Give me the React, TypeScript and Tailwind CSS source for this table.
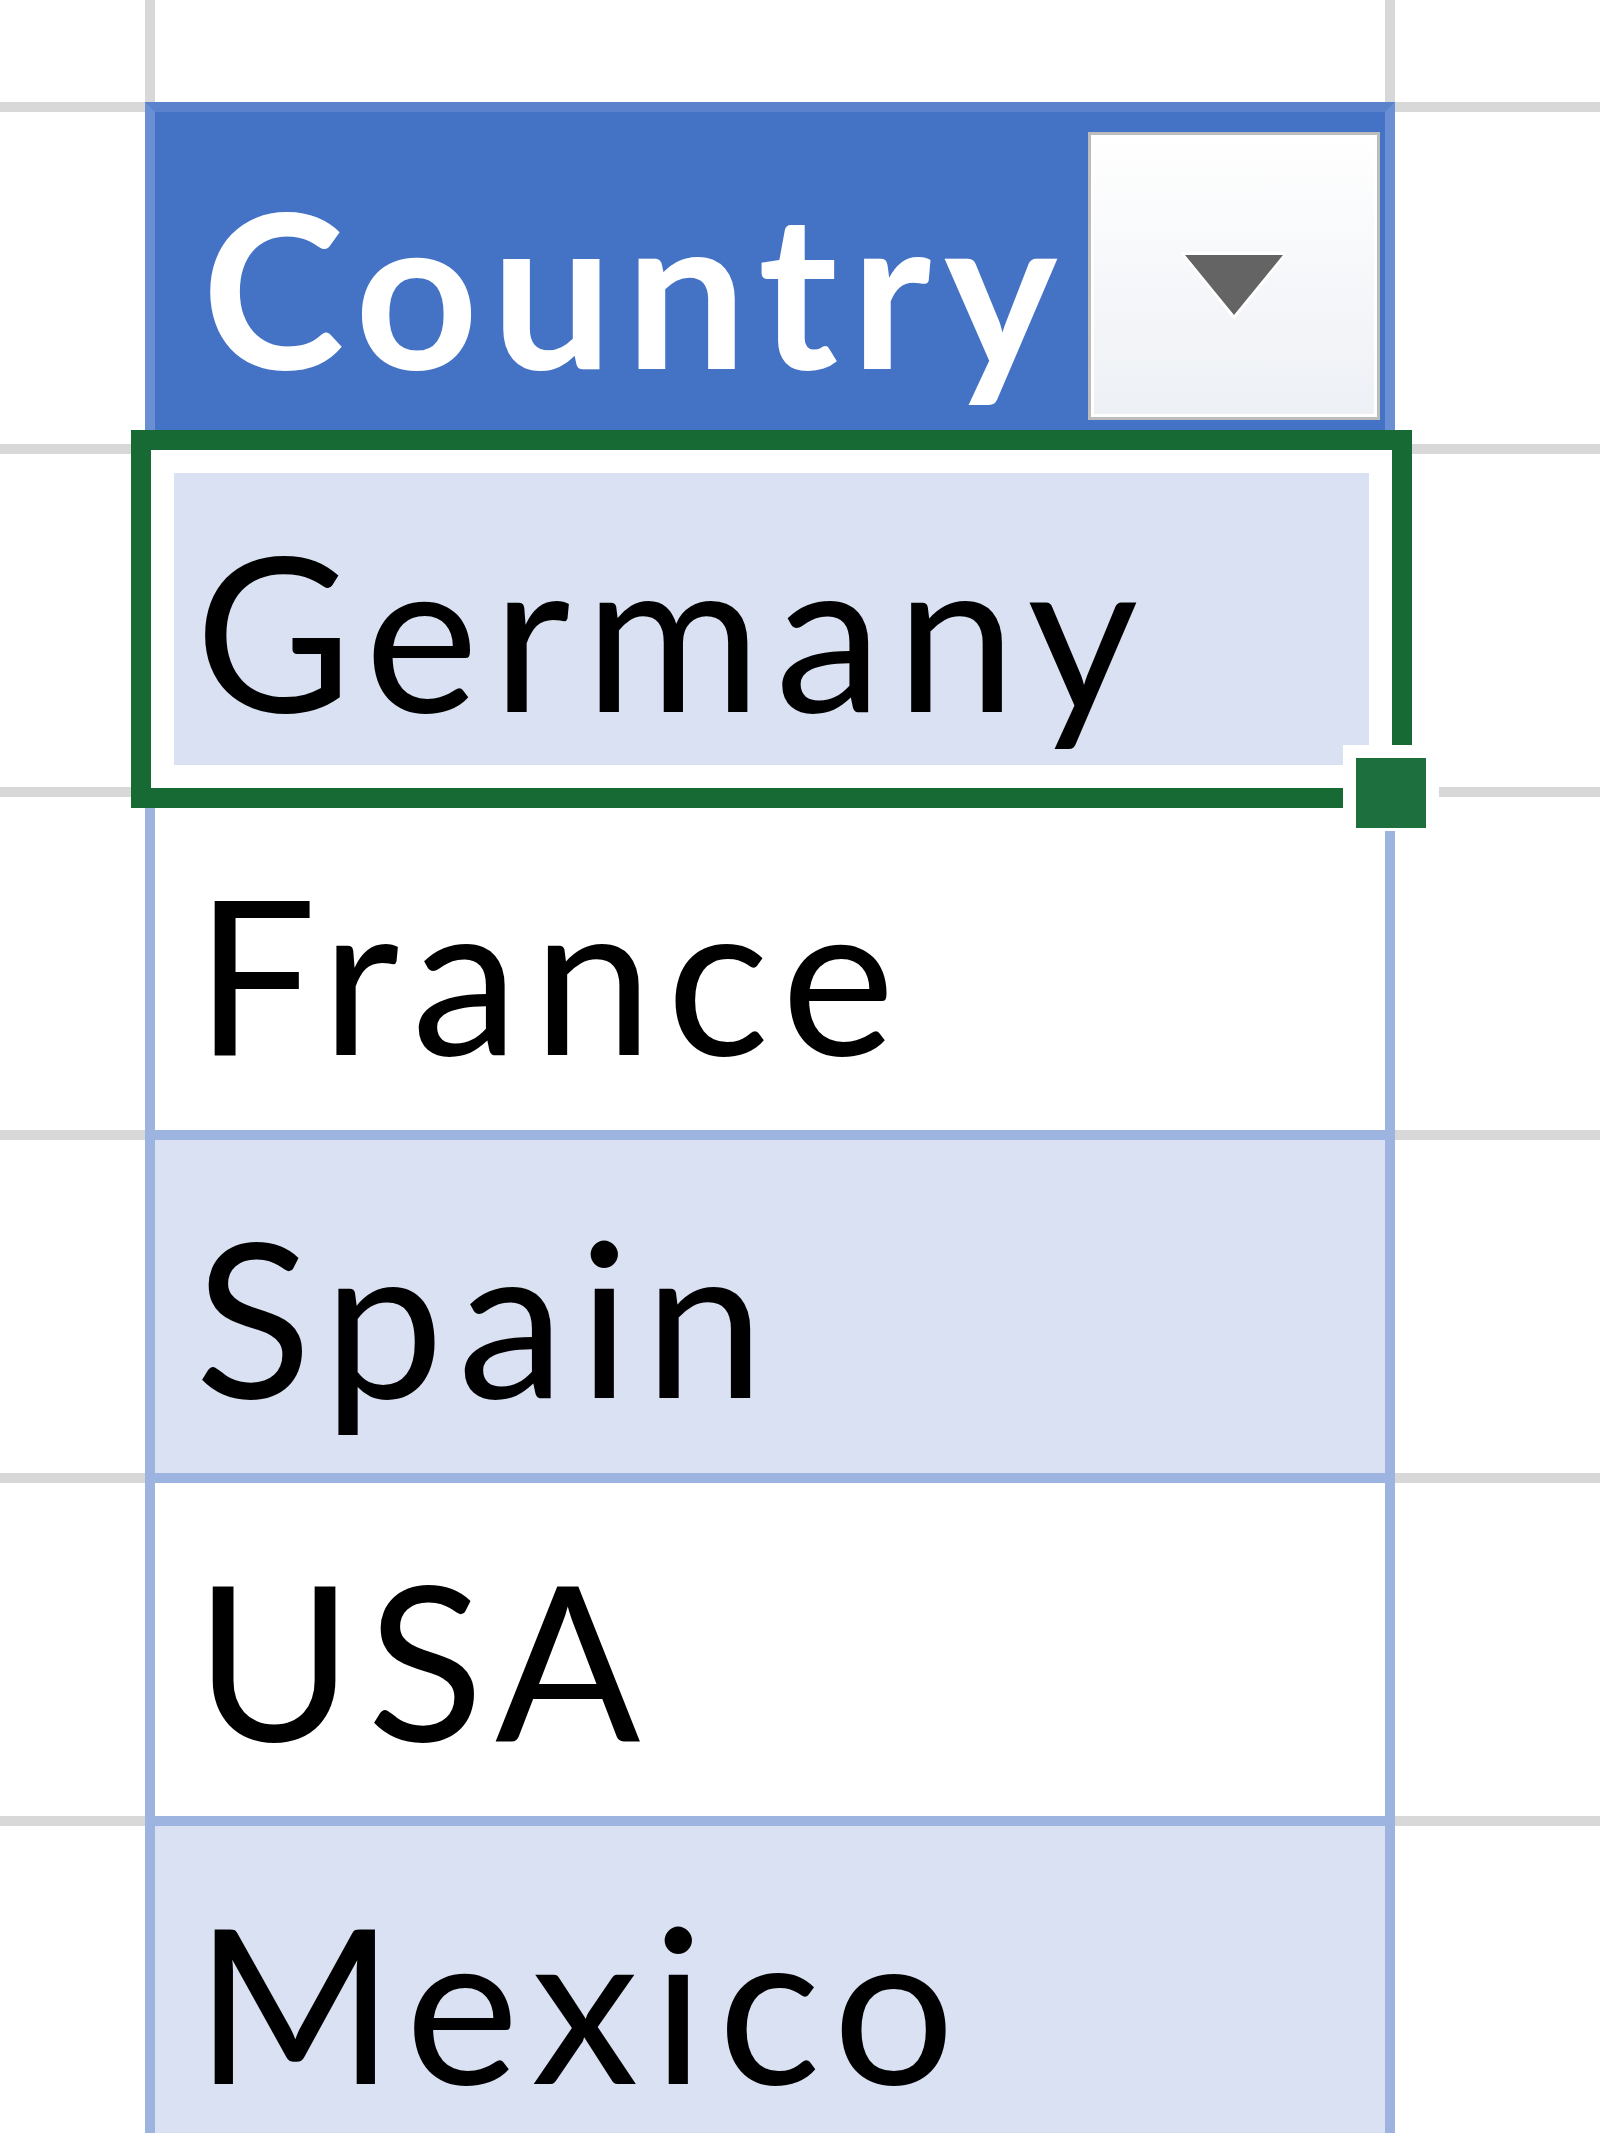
import React from 'react';

const ROWS = ['Germany', 'France', 'Spain', 'USA', 'Mexico'];

const cellFont = { fontFamily: 'Lato, "Open Sans", sans-serif' };

const FilterButton: React.FC = () => (
  <div className="mt-[20px] mr-[5px] h-[288px] w-[292px] shrink-0 border-[3px] border-[#bcbcbc] bg-white p-[3px]">
    <div className="flex h-full w-full items-center justify-center bg-gradient-to-b from-white to-[#edf0f5] pt-[20px]">
      <svg width="114" height="74" viewBox="0 0 114 74">
        <polygon points="3,3 111,3 57,71" fill="#fff" />
        <polygon points="8,6 106,6 57,66" fill="#646464" />
      </svg>
    </div>
  </div>
);

const Selection: React.FC = () => (
  <>
    <div className="pointer-events-none absolute -left-[24px] -right-[27px] -top-[24px] -bottom-[21px] z-10 border-[20px] border-[#176a33]">
      <div className="h-full w-full border-[23px] border-white" />
    </div>
    <div className="pointer-events-none absolute left-[1188px] top-[291px] z-20 h-[86px] w-[96px] border-[13px] border-b-[3px] border-white bg-[#1d6f3d]" />
  </>
);

const App: React.FC = () => {
  return (
    <div className="h-[2133px] w-[1600px] overflow-hidden bg-white" style={cellFont}>
      {/* empty row above the table */}
      <div className="flex h-[102px]">
        <div className="w-[145px]" />
        <div className="w-[1250px] border-x-[10px] border-[#d8d8d8]" />
        <div className="flex-1" />
      </div>

      {/* header */}
      <div className="flex h-[342px]">
        <div className="w-[145px] border-t-[10px] border-[#d8d8d8]" />
        <div className="flex w-[1250px] border-x-[10px] border-t-[10px] border-x-[#6b8fd4] border-t-[#5a82cd] bg-[#4472c4]">
          <div className="flex flex-1 items-end pb-[50px] pl-[47px]">
            <span className="text-[215px] font-bold leading-none tracking-[0.06em] text-white">Country</span>
          </div>
          <FilterButton />
        </div>
        <div className="flex-1 border-t-[10px] border-[#d8d8d8]" />
      </div>

      {ROWS.map((name, i) => (
        <div key={name} className="flex h-[343px]">
          <div className="w-[145px] border-t-[10px] border-[#d8d8d8]" />
          <div
            className={`relative flex w-[1250px] items-end border-x-[10px] border-t-[10px] border-[#9db4e0] pb-[50px] pl-[40px] ${
              i % 2 === 0 ? 'bg-[#d9e1f2]' : 'bg-white'
            }`}
          >
            <span className="text-[215px] leading-none tracking-[0.065em] text-black">{name}</span>
            {i === 0 && <Selection />}
          </div>
          <div className="flex-1 border-t-[10px] border-[#d8d8d8]" />
        </div>
      ))}
    </div>
  );
};

export default App;
